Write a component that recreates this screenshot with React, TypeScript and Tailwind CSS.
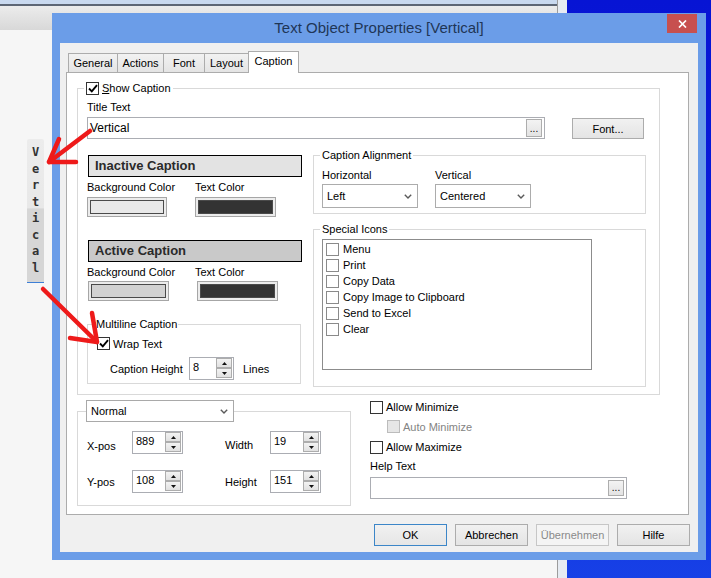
import React from 'react';

function Check() {
  return (
    <svg width="10" height="9" viewBox="0 0 10 9">
      <path d="M1 4.5 L3.8 7.3 L9 1.2" fill="none" stroke="#000" strokeWidth="1.9" />
    </svg>
  );
}

function CheckBox({ checked = false, disabled = false, light = false }: { checked?: boolean; disabled?: boolean; light?: boolean }) {
  const tone = disabled
    ? 'border-[#bcbcbc] bg-[#e6e6e6]'
    : light
      ? 'border-[#8a8a8a] bg-white'
      : 'border-[#333333] bg-white';
  return (
    <span className={`w-[13px] h-[13px] shrink-0 flex items-center justify-center border ${tone}`}>
      {checked && <Check />}
    </span>
  );
}

function Chevron() {
  return (
    <svg width="8" height="5" viewBox="0 0 8 5">
      <path d="M0.8 0.8 L4 4 L7.2 0.8" fill="none" stroke="#5a5a5a" strokeWidth="1.4" />
    </svg>
  );
}

function Combo({ value, className = '' }: { value: string; className?: string }) {
  return (
    <div className={`flex items-center justify-between bg-white border pl-[4px] pr-[5px] ${className}`}>
      <span>{value}</span>
      <Chevron />
    </div>
  );
}

function SpinBtn({ up = false }: { up?: boolean }) {
  return (
    <div className="h-[10px] border border-[#adadad] bg-gradient-to-b from-[#f3f3f3] to-[#e1e1e1] flex items-center justify-center">
      <svg width="5" height="3" viewBox="0 0 5 3">
        <path d={up ? 'M0 3 L2.5 0 L5 3Z' : 'M0 0 L2.5 3 L5 0Z'} fill="#111" />
      </svg>
    </div>
  );
}

function Spin({ value, className = '' }: { value: string; className?: string }) {
  return (
    <div className={`flex bg-white border border-[#abadb3] ${className}`}>
      <span className="flex-1 pl-[3px] pt-[2px] leading-[14px]">{value}</span>
      <div className="w-[16px] mr-[1px] flex flex-col">
        <SpinBtn up />
        <SpinBtn />
      </div>
    </div>
  );
}

function Dots({ className = '' }: { className?: string }) {
  return (
    <div className={`border border-[#adadad] bg-gradient-to-b from-[#f3f3f3] to-[#e3e3e3] flex items-end justify-center text-[10px] leading-[10px] pb-[2px] ${className}`}>
      ...
    </div>
  );
}

function Btn({ children, kind = 'normal', className = '' }: { children: React.ReactNode; kind?: 'normal' | 'default' | 'disabled'; className?: string }) {
  const tone =
    kind === 'default'
      ? 'border-[#3c86c8] bg-gradient-to-b from-[#f1f1f1] to-[#e6e6e6]'
      : kind === 'disabled'
        ? 'border-[#c6c6c6] bg-[#f4f4f4] text-[#8a8a8a]'
        : 'border-[#acacac] bg-gradient-to-b from-[#f1f1f1] to-[#e4e4e4]';
  return <div className={`border flex items-center justify-center ${tone} ${className}`}>{children}</div>;
}

function CapHeader({ children, className = '' }: { children: React.ReactNode; className?: string }) {
  return (
    <div className={`w-[214px] h-[22px] border border-black flex items-center pl-[6px] font-bold text-[13px] text-[#2a2a2a] ${className}`}>
      {children}
    </div>
  );
}

function Swatch({ className = '', fill }: { className?: string; fill: string }) {
  return (
    <div className={`h-[20px] border border-[#a6a6a6] bg-[#ececec] p-[2px] ${className}`}>
      <div className={`h-full border border-[#4a4a4a] ${fill}`} />
    </div>
  );
}

const specialIcons = ['Menu', 'Print', 'Copy Data', 'Copy Image to Clipboard', 'Send to Excel', 'Clear'];

const tabs = [
  { label: 'General', cls: 'w-[49px] h-[19px] border-l border-t' },
  { label: 'Actions', cls: 'w-[46px] h-[19px] border-l border-t' },
  { label: 'Font', cls: 'w-[41px] h-[19px] border-l border-t' },
  { label: 'Layout', cls: 'w-[44px] h-[19px] border-l border-t' },
];

export default function App() {
  return (
    <div className="relative w-[711px] h-[578px] overflow-hidden flex font-['Liberation_Sans',Arial,sans-serif] text-[11px] leading-[14px] text-black">
      {/* application window behind the dialog */}
      <div className="w-[558px] h-full bg-[#f6f6f6] border-r border-[#9c9c9c] flex flex-col">
        <div className="h-[4px] bg-[#c9d9ef]" />
        <div className="h-[2px] bg-[#5d6675]" />
        <div className="h-[24px] bg-gradient-to-b from-[#ececec] to-[#d8d8d8]" />
        <div className="ml-[27px] mt-[109px] w-[17px] h-[144px] rounded-t-[2px] bg-[linear-gradient(to_bottom,#ececec_0%,#e8e8e8_48%,#d6d6d6_49%,#d6d6d6_100%)] border-b border-[#3d7fd6] flex flex-col items-center pt-[5px] font-['DejaVu_Sans_Mono',monospace] font-bold text-[12px] leading-[16.5px] text-[#333333]">
          {'Vertical'.split('').map((c, i) => (
            <span key={i}>{c}</span>
          ))}
        </div>
      </div>
      <div className="w-[9px] h-full bg-[#e6ebf2]" />
      <div className="flex-1 h-full bg-gradient-to-b from-[#0714d4] via-[#0a1edb] to-[#1740e6]" />

      {/* dialog */}
      <div className="absolute left-[52px] top-[13px] w-[654px] h-[547px] bg-[#6b9de8] flex flex-col">
        <div className="relative h-[30px] flex items-center justify-center">
          <span className="text-[15px] leading-[18px] text-[#1f3656]">Text Object Properties [Vertical]</span>
          <div className="absolute right-[9px] top-[1px] w-[30px] h-[19px] bg-[#c7504f] flex items-center justify-center">
            <svg width="9" height="8" viewBox="0 0 9 8">
              <path d="M1 0.5 L8 7.5 M8 0.5 L1 7.5" stroke="#fff" strokeWidth="1.7" />
            </svg>
          </div>
        </div>

        <div className="mx-[8px] h-[509px] bg-[#f0f0f0] flex flex-col">
          {/* tab strip */}
          <div className="ml-[8px] mt-[8px] h-[21px] flex items-end">
            {tabs.map((t) => (
              <div key={t.label} className={`${t.cls} border-[#acacac] bg-gradient-to-b from-[#f2f2f2] to-[#e4e4e4] flex items-center justify-center`}>
                {t.label}
              </div>
            ))}
            <div className="relative z-10 w-[51px] h-[22px] -mb-[1px] border-l border-t border-r border-[#acacac] bg-white flex justify-center pt-[2px]">
              Caption
            </div>
          </div>

          {/* tab page */}
          <div className="ml-[6px] w-[623px] h-[443px] bg-white border border-[#acacac] pt-[8px] pl-[10px]">
            <fieldset className="w-[583px] border border-[#d9d9d9] pl-[9px] pb-[7px]">
              <legend className="ml-[-3px] px-[2px] h-[14px] flex items-center gap-[3px]">
                <CheckBox checked />
                <span>
                  <span className="underline">S</span>how Caption
                </span>
              </legend>
              <div className="mt-[5px] h-[14px]">Title Text</div>
              <div className="mt-[3px] flex items-start">
                <div className="w-[458px] h-[22px] border border-[#abadb3] bg-white flex items-center justify-between pl-[2px] pr-[2px]">
                  <span className="text-[12px]">Vertical</span>
                  <Dots className="w-[16px] h-[18px]" />
                </div>
                <Btn className="ml-[27px] mt-[1px] w-[72px] h-[21px]">Font...</Btn>
              </div>

              <div className="mt-[9px] flex items-start">
                {/* left column */}
                <div className="w-[215px] flex flex-col">
                  <CapHeader className="mt-[7px] ml-[1px] bg-[#e3e3e3]">Inactive Caption</CapHeader>
                  <div className="mt-[3px] h-[14px] flex">
                    <span className="w-[108px]">Background Color</span>
                    <span>Text Color</span>
                  </div>
                  <div className="mt-[3px] flex">
                    <Swatch className="w-[80px]" fill="bg-[#e8e8e8]" />
                    <Swatch className="ml-[28px] w-[81px]" fill="bg-[#333333]" />
                  </div>

                  <CapHeader className="mt-[23px] ml-[1px] bg-[#c9c9c9]">Active Caption</CapHeader>
                  <div className="mt-[3px] h-[14px] flex">
                    <span className="w-[108px]">Background Color</span>
                    <span>Text Color</span>
                  </div>
                  <div className="mt-[2px] flex">
                    <Swatch className="ml-[1px] w-[81px]" fill="bg-[#d2d2d2]" />
                    <Swatch className="ml-[28px] w-[81px]" fill="bg-[#333333]" />
                  </div>

                  <fieldset className="mt-[16px] w-[214px] border border-[#d9d9d9] pl-[9px] pb-[3px]">
                    <legend className="ml-[-2px] px-[1px] h-[14px]">Multiline Caption</legend>
                    <div className="mt-[6px] h-[13px] flex items-center gap-[3px]">
                      <CheckBox checked />
                      <span>Wrap Text</span>
                    </div>
                    <div className="mt-[7px] flex items-center">
                      <span className="ml-[13px] w-[79px]">Caption Height</span>
                      <Spin value="8" className="w-[45px] h-[23px]" />
                      <span className="ml-[9px]">Lines</span>
                    </div>
                  </fieldset>
                </div>

                {/* right column */}
                <div className="ml-[11px] w-[333px] flex flex-col">
                  <fieldset className="border border-[#d9d9d9] pl-[8px] pb-[5px]">
                    <legend className="ml-[-2px] px-[2px] h-[14px]">Caption Alignment</legend>
                    <div className="mt-[6px] h-[14px] flex">
                      <span className="w-[113px]">Horizontal</span>
                      <span>Vertical</span>
                    </div>
                    <div className="mt-[2px] flex gap-[17px]">
                      <Combo value="Left" className="w-[96px] h-[24px] border-[#acacac]" />
                      <Combo value="Centered" className="w-[96px] h-[24px] border-[#acacac]" />
                    </div>
                  </fieldset>

                  <fieldset className="mt-[8px] border border-[#d9d9d9] pl-[8px] pb-[16px]">
                    <legend className="ml-[-2px] px-[2px] h-[14px]">Special Icons</legend>
                    <div className="mt-[3px] w-[270px] h-[131px] border border-[#8c8c8c] bg-white pl-[3px] pt-[1px]">
                      {specialIcons.map((s) => (
                        <div key={s} className="h-[16px] flex items-center gap-[4px]">
                          <CheckBox light />
                          <span>{s}</span>
                        </div>
                      ))}
                    </div>
                  </fieldset>
                </div>
              </div>
            </fieldset>

            {/* position / size and window options */}
            <div className="mt-[5px] flex items-start">
              <fieldset className="w-[274px] border border-[#d9d9d9] pl-[9px] pb-[12px]">
                <legend className="ml-[-1px]">
                  <Combo value="Normal" className="w-[148px] h-[22px] border-[#a9a9a9]" />
                </legend>
                <div className="mt-[9px] flex items-start">
                  <span className="w-[45px] pt-[8px]">X-pos</span>
                  <Spin value="889" className="w-[51px] h-[23px]" />
                  <span className="ml-[42px] w-[45px] pt-[7px]">Width</span>
                  <Spin value="19" className="w-[51px] h-[23px]" />
                </div>
                <div className="mt-[16px] flex items-start">
                  <span className="w-[45px] pt-[5px]">Y-pos</span>
                  <Spin value="108" className="w-[51px] h-[23px]" />
                  <span className="ml-[42px] w-[45px] pt-[5px]">Height</span>
                  <Spin value="151" className="w-[51px] h-[23px]" />
                </div>
              </fieldset>

              <div className="ml-[19px] w-[257px] flex flex-col">
                <div className="h-[14px] flex items-center gap-[3px]">
                  <CheckBox />
                  <span>Allow Minimize</span>
                </div>
                <div className="mt-[6px] pl-[17px] h-[13px] flex items-center gap-[3px] text-[#838383]">
                  <CheckBox disabled />
                  <span>Auto Minimize</span>
                </div>
                <div className="mt-[7px] h-[14px] flex items-center gap-[3px]">
                  <CheckBox />
                  <span>Allow Maximize</span>
                </div>
                <div className="mt-[5px] h-[14px]">Help Text</div>
                <div className="mt-[4px] h-[22px] border border-[#abadb3] bg-white flex items-center justify-end pr-[2px]">
                  <Dots className="w-[16px] h-[16px]" />
                </div>
              </div>
            </div>
          </div>

          {/* dialog buttons */}
          <div className="mt-[9px] pr-[8px] flex justify-end gap-[8px]">
            <Btn kind="default" className="w-[73px] h-[22px]">OK</Btn>
            <Btn className="w-[73px] h-[22px]">Abbrechen</Btn>
            <Btn kind="disabled" className="w-[73px] h-[22px]">Übernehmen</Btn>
            <Btn className="w-[73px] h-[22px]">Hilfe</Btn>
          </div>
        </div>
      </div>

      {/* red annotation arrows */}
      <svg className="absolute inset-0 pointer-events-none" width="711" height="578" viewBox="0 0 711 578">
        <g stroke="#ee1a1a" strokeWidth="4.5" strokeLinecap="round" strokeLinejoin="round" fill="none">
          <path d="M90 131 L49 162" />
          <path d="M59 139 L49 162 L76 162" />
          <path d="M43 289 L97 342" />
          <path d="M92 313 L97 342 L70 338" />
        </g>
      </svg>
    </div>
  );
}
